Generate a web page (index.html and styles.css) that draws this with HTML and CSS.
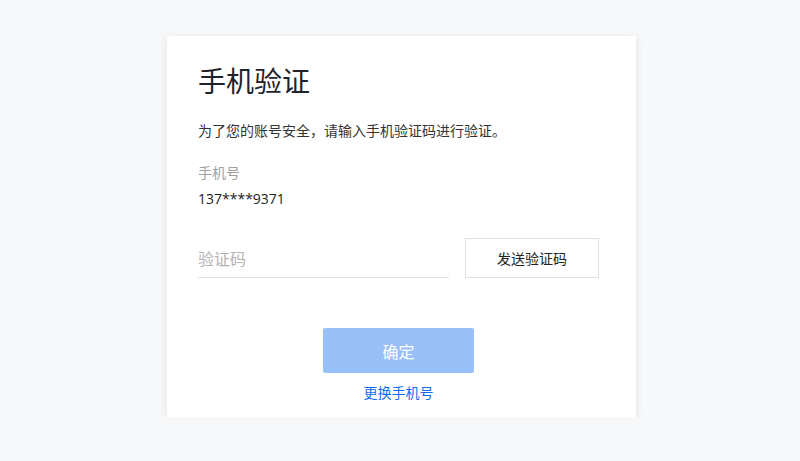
FILE: index.html
```html
<!DOCTYPE html>
<html lang="zh-CN">
<head>
<meta charset="utf-8">
<title>手机验证</title>
<link rel="stylesheet" href="styles.css">
</head>
<body>
<div class="page">
  <div class="card">
    <h1 class="title">手机验证</h1>
    <p class="desc">为了您的账号安全，请输入手机验证码进行验证。</p>
    <div class="label">手机号</div>
    <div class="phone">137****9371</div>
    <div class="code-row">
      <input class="code-input" type="text" placeholder="验证码">
      <button class="send-btn" type="button">发送验证码</button>
    </div>
    <div class="actions">
      <button class="confirm-btn" type="button">确定</button>
      <a class="change-link" href="#">更换手机号</a>
    </div>
  </div>
</div>
</body>
</html>
```

FILE: styles.css
```css
html, body {
  margin: 0;
  padding: 0;
  background: #f7f8fa;
  font-family: "Noto Sans CJK SC", "Noto Sans", sans-serif;
  color: #333;
}
.page {
  padding: 36px 0 0 167px;
}
.card {
  width: 469px;
  height: 381px;
  box-sizing: border-box;
  background: #fff;
  box-shadow: 0 2px 8px rgba(0, 0, 0, 0.1);
  padding: 26px 37px 0 31px;
}
.title {
  margin: 0;
  font-size: 28px;
  font-weight: 400;
  line-height: 36px;
  color: #1f2329;
}
.desc {
  margin: 22px 0 0;
  font-size: 14px;
  line-height: 20px;
  color: #333;
}
.label {
  margin-top: 22px;
  font-size: 14px;
  line-height: 20px;
  color: #a0a0a0;
}
.phone {
  margin-top: 7px;
  font-size: 14px;
  line-height: 20px;
  color: #222;
  font-family: "Open Sans", "Noto Sans CJK SC", sans-serif;
}
.code-row {
  display: flex;
  gap: 16px;
  margin-top: 29px;
  align-items: stretch;
}
.code-input {
  flex: 0 0 251px;
  box-sizing: border-box;
  height: 40px;
  border: none;
  border-bottom: 1px solid #dcdfe6;
  outline: none;
  padding: 0;
  font-family: inherit;
  font-size: 16px;
  color: #333;
  background: transparent;
}
.code-input::placeholder {
  color: #b4b4b4;
}
.send-btn {
  flex: 0 0 134px;
  box-sizing: border-box;
  height: 40px;
  border: 1px solid #dcdfe6;
  background: #fff;
  font-family: inherit;
  font-size: 14px;
  color: #222;
  padding: 0;
}
.actions {
  display: flex;
  flex-direction: column;
  align-items: center;
  margin-top: 50px;
}
.confirm-btn {
  width: 151px;
  height: 45px;
  border: none;
  border-radius: 2px;
  background: #99c1f8;
  color: #fff;
  font-family: inherit;
  font-size: 16px;
  padding: 0;
}
.change-link {
  margin-top: 9px;
  font-size: 14px;
  line-height: 20px;
  color: #0d6ff0;
  text-decoration: none;
}
```
